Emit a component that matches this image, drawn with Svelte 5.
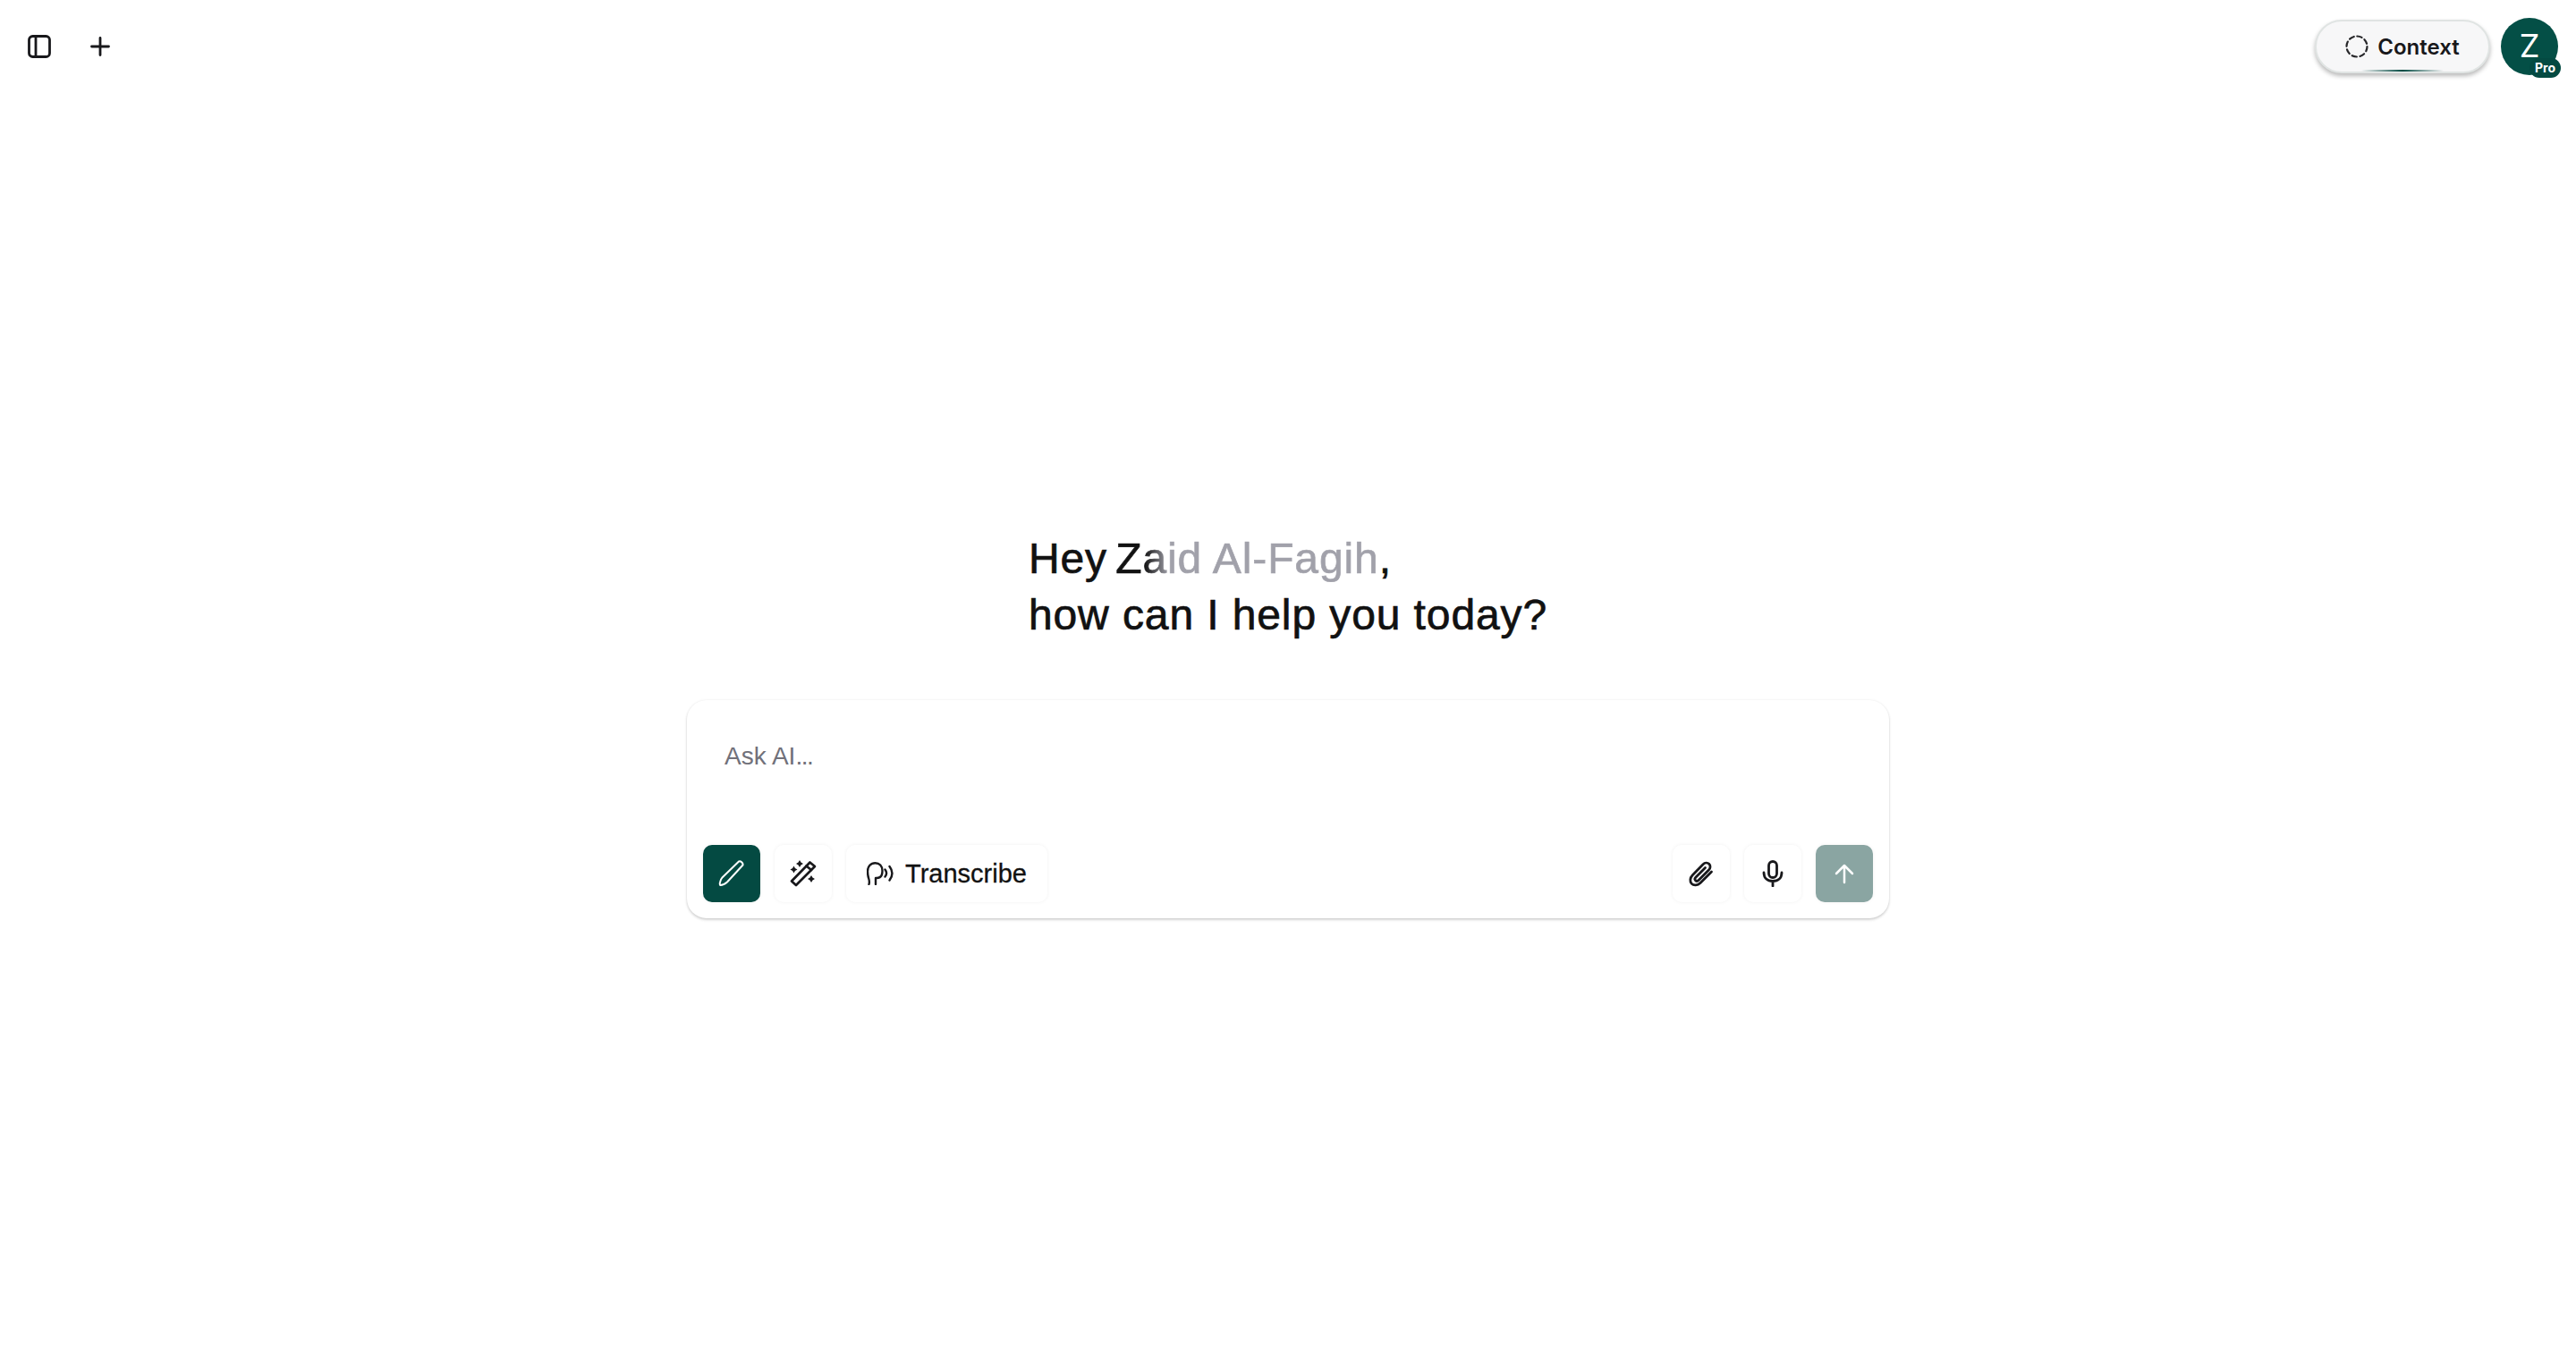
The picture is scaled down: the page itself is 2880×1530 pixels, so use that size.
<script lang="ts">
	let name = 'Zaid Al-Fagih';
</script>

<div class="page">
	<header class="top">
		<div class="left">
			<button class="plain" aria-label="Toggle sidebar">
				<svg viewBox="0 0 28 28" width="28" height="28" fill="none" stroke="#18181b" stroke-width="2.8" stroke-linejoin="round">
					<rect x="2.500" y="2.500" width="23" height="23" rx="4" />
					<path d="M10 2.500v23" />
				</svg>
			</button>
			<button class="plain" aria-label="New chat">
				<svg viewBox="0 0 24 24" width="24" height="24" fill="none" stroke="#18181b" stroke-width="2.800" stroke-linecap="round">
					<path d="M2.500 12h19M12 2.500v19" />
				</svg>
			</button>
		</div>
		<div class="right">
			<button class="context">
				<svg viewBox="0 0 26 26" width="26" height="26" fill="none" stroke="#27272a" stroke-width="2.200" stroke-linecap="round">
					<circle cx="13" cy="13" r="11.500" stroke-dasharray="5.400 3.630" />
				</svg>
				Context
				<span class="glow"></span>
			</button>
			<div class="avatar">
				Z
				<span class="pro">Pro</span>
			</div>
		</div>
	</header>

	<main class="center">
		<h1>
			<span class="hey">Hey</span> <span class="fade">{name}</span>,<br />
			how can I help you today?
		</h1>

		<section class="card">
			<div class="placeholder">Ask AI<span class="dots">...</span></div>
			<div class="tools">
				<div class="group">
					<button class="square active" aria-label="Write">
						<svg viewBox="0 0 30 30" width="30" height="30" fill="none" stroke="#fff" stroke-width="2" stroke-linejoin="round">
							<path d="M23 1.500c2-1 5 1.800 4.500 4L10 24.500c-2.500 2.200-5.500 3.600-7.800 3.500-.6-.5-.5-1.800-.2-3.200.4-2.200 1.300-4 2.700-5.600z" />
						</svg>
					</button>
					<button class="square" aria-label="Enhance">
						<svg viewBox="0 0 30 30" width="30" height="30" fill="none" stroke="#18181b" stroke-width="2.700" stroke-linejoin="round" stroke-linecap="round">
							<path d="M22.500 2.500l5.500 4.500L7 28 2 23.500z" />
							<path d="M18.500 6.500l5.500 4.500" />
							<path fill="#18181b" stroke="none" d="M11 0l1.500 2.500L15 4l-2.500 1.500L11 8 9.500 5.500 7 4l2.500-1.500zM4.500 6.500l1.400 2.600 2.600 1.400-2.600 1.400-1.400 2.600-1.400-2.600L.500 10.500l2.600-1.400zM24 17l1.500 2.500L28 21l-2.500 1.500L24 25l-1.500-2.500L20 21l2.500-1.500z" />
						</svg>
					</button>
					<button class="transcribe">
						<svg viewBox="0 0 30 26" width="30" height="26" fill="none" stroke="#18181b" stroke-width="2.400" stroke-linecap="round" stroke-linejoin="round">
							<path d="M2.500 25c.8-2.500.5-4-.3-6.500C1.400 16 1 13.500 1 10.500 1 5 4.500 1.200 9.500 1.200c4.800 0 8 3.600 8 8.800 0 1.800-.2 3.300-.8 4.800-.8 2-2.800 3.200-5.700 3.200H10V25" />
							<path d="M20.500 8.500c2 2.500 2 5.500 0 8M25.500 5c3.800 5 3.800 10.500 0 15.500" />
						</svg>
						Transcribe
					</button>
				</div>
				<div class="group">
					<button class="square" aria-label="Attach">
						<svg viewBox="0 0 30 30" width="30" height="30" fill="none" stroke="#18181b" stroke-width="2.800" stroke-linecap="round" stroke-linejoin="round">
							<path d="M26.500 13L14 25.500c-3 3-7.500 3.200-9.700.9s-2-6.700 1-9.700L17 4.800c2-2 5-2.200 6.800-.5s1.600 4.800-.4 6.800L12 22.500c-1 1-2.500 1.100-3.400.2s-.8-2.400.2-3.400L19.500 8.500" />
						</svg>
					</button>
					<button class="square" aria-label="Dictate">
						<svg viewBox="0 0 30 30" width="30" height="30" fill="none" stroke="#18181b" stroke-width="2.800" stroke-linecap="round" stroke-linejoin="round">
							<rect x="10.500" y="1.500" width="9" height="18" rx="4.500" />
							<path d="M5 14c0 6 4 9.500 10 9.500S25 20 25 14M15 23.500V29" />
						</svg>
					</button>
					<button class="square send" aria-label="Send">
						<svg viewBox="0 0 24 24" width="24" height="24" fill="none" stroke="#fff" stroke-width="2.500" stroke-linecap="round" stroke-linejoin="round">
							<path d="M12 22V3M3 12l9-9 9 9" />
						</svg>
					</button>
				</div>
			</div>
		</section>
	</main>
</div>

<style>
	:global(body) {
		margin: 0;
		background: #fff;
	}

	.page {
		height: 1530px;
		display: flex;
		flex-direction: column;
		font-family: Inter, 'Liberation Sans', sans-serif;
		color: #18181b;
	}

	button {
		font-family: inherit;
		border: none;
		background: none;
		padding: 0;
		color: inherit;
		cursor: pointer;
	}

	.top {
		display: flex;
		justify-content: space-between;
		align-items: center;
		padding: 20px 20px 0 30px;
		height: 64px;
	}

	.left {
		display: flex;
		align-items: center;
		gap: 42px;
	}

	.plain {
		display: flex;
	}

	.right {
		display: flex;
		align-items: center;
		gap: 12px;
	}

	.context {
		position: relative;
		width: 196px;
		height: 60px;
		display: flex;
		align-items: center;
		justify-content: center;
		gap: 10px;
		border-radius: 30px;
		background: #f7f7f8;
		border: 2px solid #e0e4e3;
		box-sizing: border-box;
		box-shadow: 0 3px 5px rgba(0, 0, 0, 0.28);
		font-size: 24px;
		font-weight: 600;
		overflow: hidden;
	}

	.glow {
		position: absolute;
		left: 50px;
		right: 50px;
		bottom: -1px;
		height: 3px;
		background: linear-gradient(90deg, transparent, #044a42 50%, transparent);
	}

	.avatar {
		position: relative;
		width: 64px;
		height: 64px;
		border-radius: 50%;
		background: #044f46;
		color: #fff;
		font-size: 36px;
		display: flex;
		align-items: center;
		justify-content: center;
		padding-bottom: 2px;
		box-sizing: border-box;
	}

	.pro {
		position: absolute;
		right: -3px;
		bottom: -3px;
		padding: 0 6px;
		height: 22px;
		line-height: 22px;
		border-radius: 11px;
		background: #044a42;
		font-size: 14px;
		font-weight: 700;
	}

	.center {
		flex: 1;
		display: flex;
		flex-direction: column;
		align-items: center;
		padding-top: 509px;
	}

	h1 {
		margin: 0 0 64px;
		font-family: 'Liberation Sans', Arial, sans-serif;
		font-size: 48px;
		line-height: 63px;
		font-weight: 400;
		letter-spacing: 0.9px;
		-webkit-text-stroke: 0.7px #111;
		color: #111;
	}

	.hey {
		margin-right: -5px;
	}

	.fade {
		background: linear-gradient(90deg, #111 0%, #111 11%, #a1a1aa 20%);
		-webkit-background-clip: text;
		background-clip: text;
		color: transparent;
		-webkit-text-stroke: 0.7px transparent;
	}

	.card {
		box-sizing: border-box;
		width: 1344px;
		height: 244px;
		border-radius: 22px;
		background: #fff;
		box-shadow: 0 0 3px rgba(0, 0, 0, 0.08), 0 2px 3px rgba(0, 0, 0, 0.16);
		padding: 0 18px 18px;
		display: flex;
		flex-direction: column;
		justify-content: space-between;
	}

	.placeholder {
		padding: 46px 24px 0;
		font-family: 'Liberation Sans', Arial, sans-serif;
		font-size: 28px;
		line-height: 34px;
		color: #71717a;
	}

	.dots {
		letter-spacing: -1.500px;
	}

	.tools {
		display: flex;
		justify-content: space-between;
	}

	.group {
		display: flex;
		gap: 16px;
	}

	.square,
	.transcribe {
		height: 64px;
		border-radius: 10px;
		background: #fff;
		box-shadow: 0 0 4px rgba(0, 0, 0, 0.06);
		display: flex;
		align-items: center;
		justify-content: center;
	}

	.square {
		width: 64px;
	}

	.active {
		background: #044a42;
	}

	.send {
		background: #8aa5a2;
	}

	.transcribe {
		width: 225px;
		justify-content: flex-start;
		padding-left: 23px;
		box-sizing: border-box;
		gap: 13px;
		font-family: 'Liberation Sans', Arial, sans-serif;
		font-size: 29px;
		-webkit-text-stroke: 0.3px #111;
		color: #111;
	}
</style>
